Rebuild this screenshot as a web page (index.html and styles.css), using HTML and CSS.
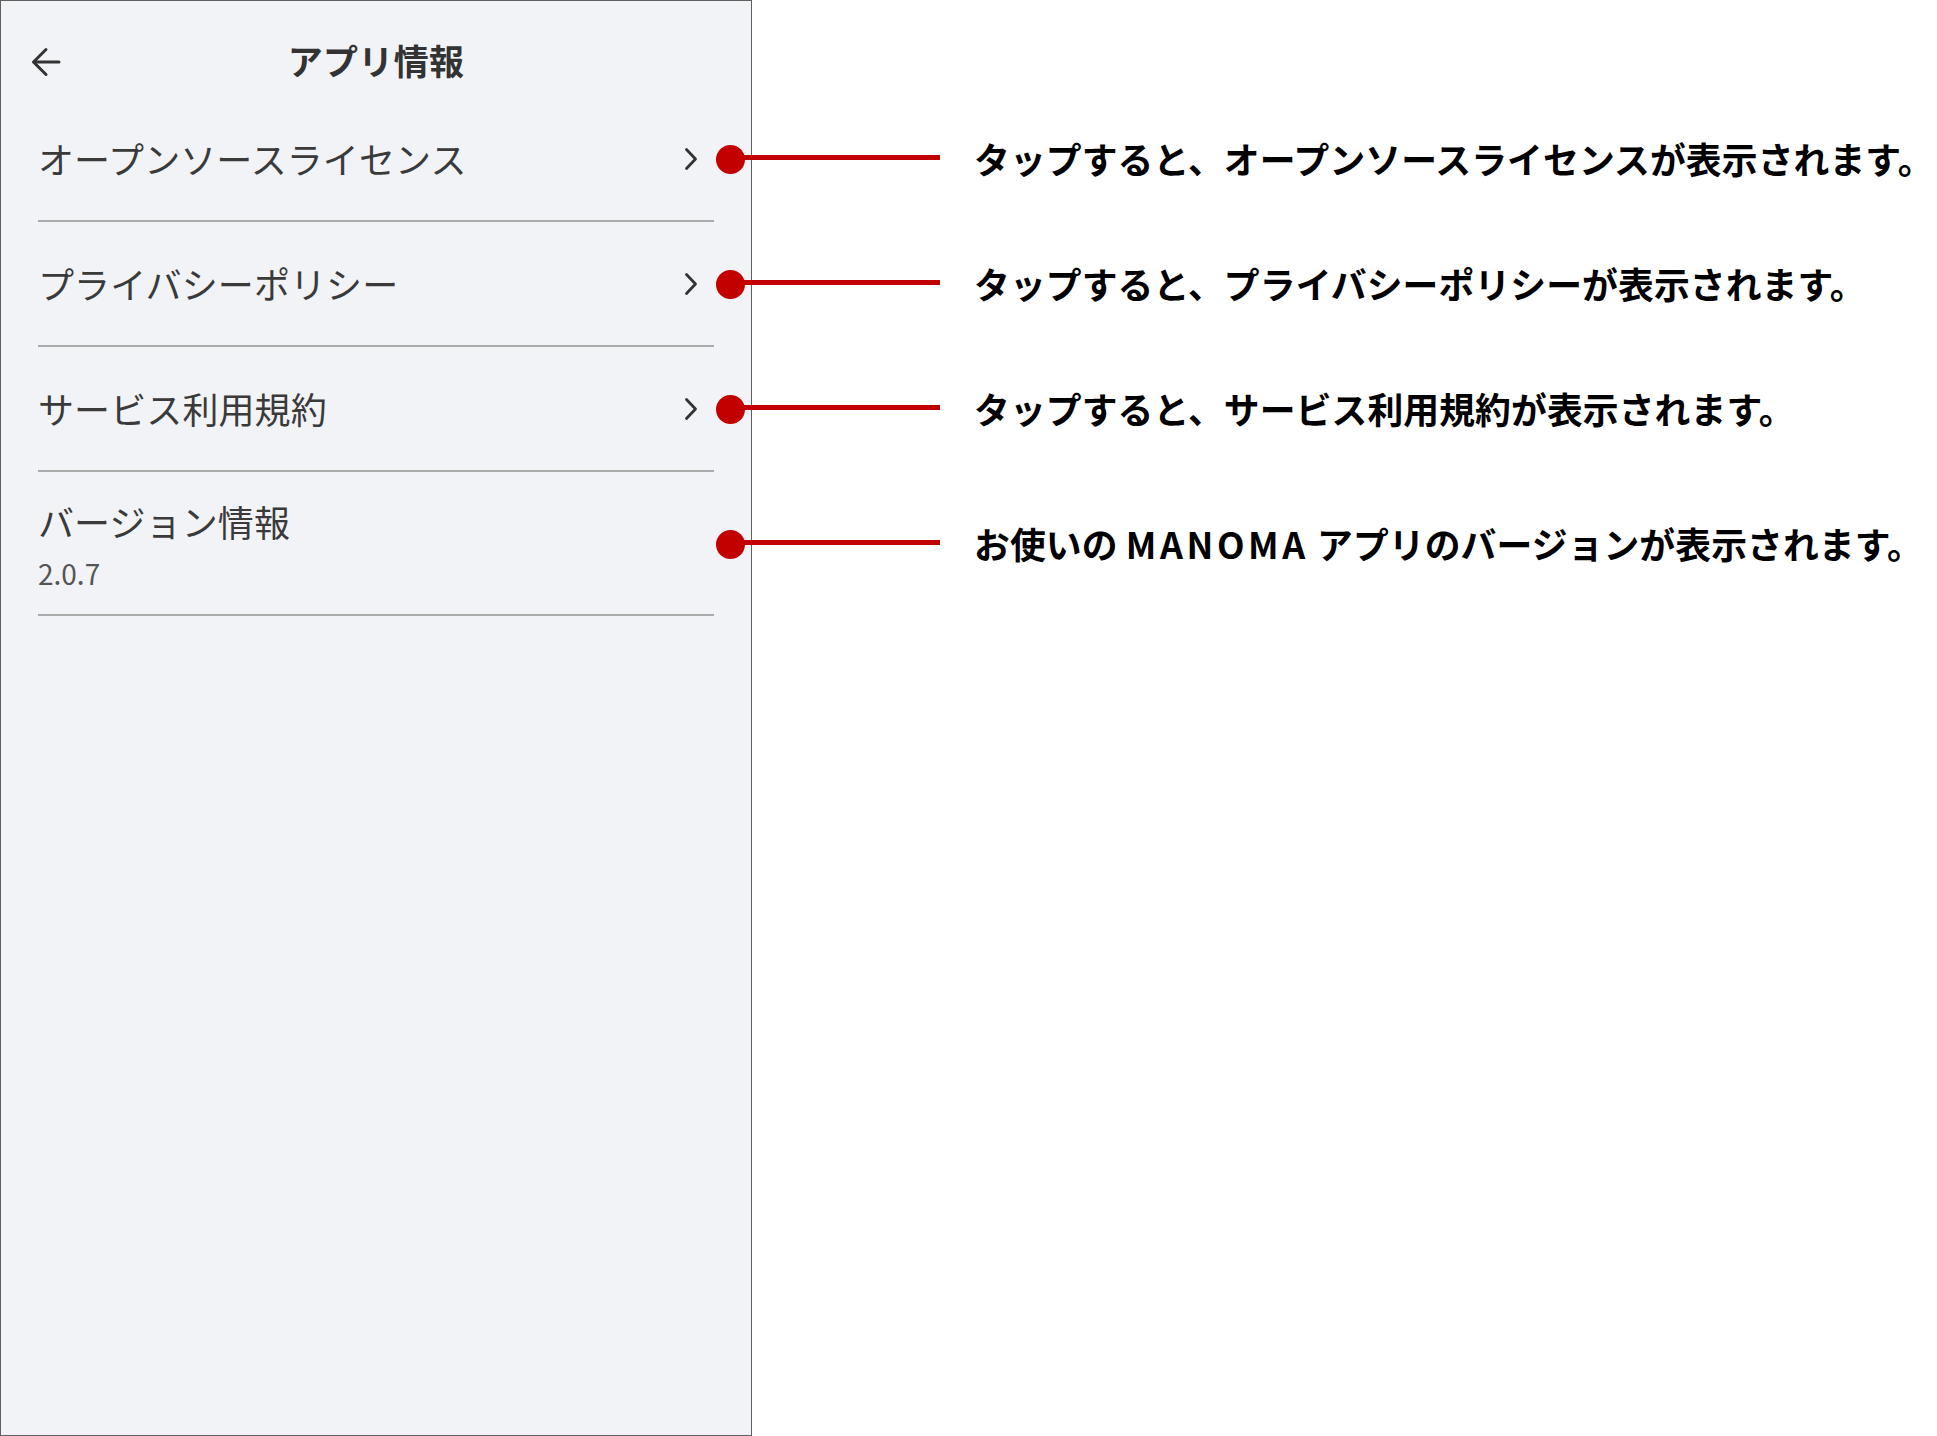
FILE: index.html
```html
<!DOCTYPE html>
<html lang="ja">
<head>
<meta charset="utf-8">
<title>アプリ情報</title>
<link rel="stylesheet" href="styles.css">
</head>
<body>
<div class="page">
  <section class="phone">
    <header class="appbar">
      <span class="back">
        <svg width="30" height="30" viewBox="0 0 30 30" fill="none" stroke="#333" stroke-width="3" stroke-linecap="round" stroke-linejoin="round">
          <line x1="28" y1="15" x2="3" y2="15"/>
          <polyline points="15,2.5 2.5,15 15,27.5"/>
        </svg>
      </span>
      <h1 class="title">アプリ情報</h1>
      <span></span>
    </header>
    <ul class="menu">
      <li class="item">
        <span class="label">オープンソースライセンス</span>
        <svg class="chev" width="14" height="24" viewBox="0 0 14 24" fill="none" stroke="#333" stroke-width="2.8" stroke-linecap="round" stroke-linejoin="round"><polyline points="2.5,2.5 11.5,12 2.5,21.5"/></svg>
      </li>
      <li class="item">
        <span class="label">プライバシーポリシー</span>
        <svg class="chev" width="14" height="24" viewBox="0 0 14 24" fill="none" stroke="#333" stroke-width="2.8" stroke-linecap="round" stroke-linejoin="round"><polyline points="2.5,2.5 11.5,12 2.5,21.5"/></svg>
      </li>
      <li class="item">
        <span class="label">サービス利用規約</span>
        <svg class="chev" width="14" height="24" viewBox="0 0 14 24" fill="none" stroke="#333" stroke-width="2.8" stroke-linecap="round" stroke-linejoin="round"><polyline points="2.5,2.5 11.5,12 2.5,21.5"/></svg>
      </li>
      <li class="item version">
        <span class="label">バージョン情報</span>
        <span class="ver">2.0.7</span>
      </li>
    </ul>
  </section>

  <div class="callouts">
    <div class="callout"><span class="dot"></span><span class="line"></span><p class="note">タップすると、オープンソースライセンスが表示されます。</p></div>
    <div class="callout"><span class="dot"></span><span class="line"></span><p class="note">タップすると、プライバシーポリシーが表示されます。</p></div>
    <div class="callout"><span class="dot"></span><span class="line"></span><p class="note">タップすると、サービス利用規約が表示されます。</p></div>
    <div class="callout tall"><span class="dot"></span><span class="line"></span><p class="note">お使いの <span class="latin">MANOMA</span> アプリのバージョンが表示されます。</p></div>
  </div>
</div>
</body>
</html>
```

FILE: styles.css
```css
* {
  box-sizing: border-box;
}

html, body {
  margin: 0;
  padding: 0;
  background: #ffffff;
}

body {
  font-family: "Noto Sans CJK JP", "Noto Sans", sans-serif;
  width: 1937px;
  height: 1436px;
  overflow: hidden;
}

.page {
  position: relative;
  width: 1937px;
  height: 1436px;
}

.phone {
  width: 752px;
  height: 1436px;
  background: #f2f3f7;
  border: 1px solid #5f5f5f;
}

.appbar {
  height: 96px;
  display: grid;
  grid-template-columns: 1fr auto 1fr;
  align-items: center;
  padding: 21px 30px 0 30px;
}

.back {
  display: flex;
  align-items: center;
  height: 44px;
  padding-top: 4px;
}

.title {
  margin: 0;
  font-size: 35px;
  line-height: 44px;
  font-weight: 700;
  color: #333333;
  letter-spacing: 0.3px;
}

.menu {
  list-style: none;
  margin: 0;
  padding: 0;
}

.item {
  height: 125px;
  margin: 0 37px 0 37px;
  border-bottom: 2px solid #ababab;
  display: flex;
  align-items: center;
  justify-content: space-between;
  padding-bottom: 2px;
}

.label {
  font-size: 36px;
  line-height: 44px;
  color: #3a3a3a;
  font-weight: 400;
  letter-spacing: 0.1px;
}

.chev {
  margin-right: 16px;
  margin-top: 2px;
}

.item.version {
  height: 144px;
  flex-direction: column;
  align-items: flex-start;
  justify-content: flex-start;
  padding-top: 27px;
}

.ver {
  margin-top: 14px;
  font-size: 28px;
  line-height: 32px;
  color: #555555;
}

.callouts {
  position: absolute;
  top: 97px;
  left: 716px;
  display: flex;
  flex-direction: column;
}

.callout {
  height: 125px;
  display: flex;
  align-items: center;
}

.callout.tall {
  height: 144px;
}

.dot {
  width: 29px;
  height: 29px;
  border-radius: 50%;
  background: #c30000;
  flex: none;
}

.line {
  width: 197px;
  height: 5px;
  margin-left: -2px;
  margin-bottom: 4px;
  background: #c30000;
  flex: none;
}

.note {
  margin: 0 0 0 34px;
  font-size: 35.8px;
  line-height: 44px;
  font-weight: 700;
  color: #000000;
  white-space: nowrap;
  letter-spacing: 0.1px;
  padding-bottom: 3px;
}

.latin {
  letter-spacing: 3.6px;
}
```
